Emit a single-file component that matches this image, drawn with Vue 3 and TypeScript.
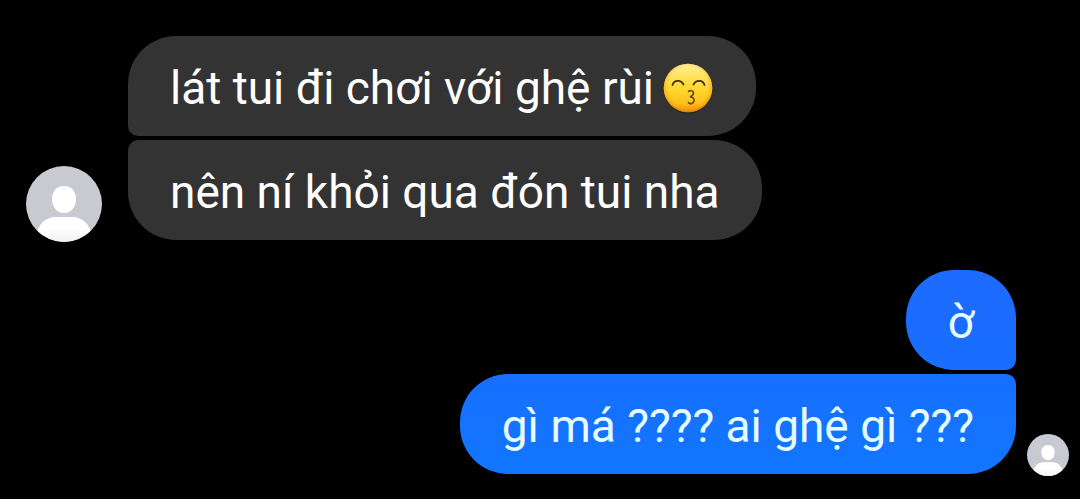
<script setup lang="ts">
interface Message {
  id: number
  text: string
  kiss?: boolean
}

interface Group {
  id: string
  side: 'received' | 'sent'
  messages: Message[]
}

const groups: Group[] = [
  {
    id: 'them',
    side: 'received',
    messages: [
      { id: 1, text: 'lát tui đi chơi với ghệ rùi', kiss: true },
      { id: 2, text: 'nên ní khỏi qua đón tui nha' },
    ],
  },
  {
    id: 'me',
    side: 'sent',
    messages: [
      { id: 3, text: 'ờ' },
      { id: 4, text: 'gì má ???? ai ghệ gì ???' },
    ],
  },
]
</script>

<template>
  <main class="chat">
    <section v-for="group in groups" :key="group.id" class="group" :class="group.side">
      <svg class="avatar" viewBox="0 0 76 76" aria-hidden="true">
        <defs>
          <clipPath :id="`disc-${group.id}`"><circle cx="38" cy="38" r="38" /></clipPath>
          <linearGradient :id="`body-${group.id}`" x1="0" y1="0" x2="0" y2="1">
            <stop offset="0.4" stop-color="#ffffff" />
            <stop offset="1" stop-color="#f2f2f4" />
          </linearGradient>
        </defs>
        <g :clip-path="`url(#disc-${group.id})`">
          <rect width="76" height="76" fill="#c9cad1" />
          <path
            d="M38 20C46 20 50 26 50 33.500C50 41 45 47 38 47C31 47 26 41 26 33.500C26 26 30 20 38 20Z"
            fill="#ffffff"
          />
          <path
            d="M10 76C10 60 18 51 30 51H46C58 51 66 60 66 76Z"
            :fill="`url(#body-${group.id})`"
          />
        </g>
      </svg>
      <div class="stack">
        <p v-for="message in group.messages" :key="message.id" class="bubble">
          {{ message.text }}
          <svg
            v-if="message.kiss"
            class="emoji"
            viewBox="0 0 52 52"
            role="img"
            aria-label="Kissing face with smiling eyes"
          >
            <defs>
              <linearGradient id="face" x1="0" y1="0" x2="0" y2="1">
                <stop offset="0" stop-color="#fff0a0" />
                <stop offset="0.28" stop-color="#ffe257" />
                <stop offset="0.55" stop-color="#ffd42c" />
                <stop offset="0.8" stop-color="#ffc41c" />
                <stop offset="1" stop-color="#ee9010" />
              </linearGradient>
              <radialGradient id="rim" cx="0.5" cy="0.46" r="0.54">
                <stop offset="0.75" stop-color="#f5a30c" stop-opacity="0" />
                <stop offset="0.92" stop-color="#f09a0c" stop-opacity="0.5" />
                <stop offset="1" stop-color="#c46a04" stop-opacity="0.8" />
              </radialGradient>
            </defs>
            <circle cx="26" cy="27" r="24.500" fill="#2a1c0c" opacity="0.8" />
            <circle cx="26" cy="26" r="24.300" fill="url(#face)" />
            <circle cx="26" cy="26" r="24.300" fill="url(#rim)" />
            <g fill="none" stroke="#43300c" stroke-width="1.800" stroke-linecap="round">
              <path d="M10.500 23C12 17.500 19 17.500 21.500 22.500" />
              <path d="M31.500 22.500C34 17.500 41 17.500 42.500 23" />
              <path
                stroke="#6b4708"
                stroke-width="1.700"
                d="M26.500 29.500C28 28 31.500 28.500 31.500 31C31.500 33.500 29 34.500 28 35C30 35 32.500 36 32 39C31.500 42 28 42.500 26.500 40.500"
              />
            </g>
          </svg>
        </p>
      </div>
    </section>
  </main>
</template>

<style scoped>
.chat {
  display: flex;
  flex-direction: column;
  gap: 28px;
  padding: 36px 11px 23px 26px;
  font-family: Roboto, "Noto Sans", sans-serif;
}

.group {
  display: flex;
  align-items: flex-end;
  gap: 26px;
}

.sent {
  flex-direction: row-reverse;
  gap: 11px;
}

.avatar {
  flex: none;
  width: 76px;
  height: 76px;
}

.sent .avatar {
  width: 42px;
  height: 42px;
}

.stack {
  display: flex;
  flex-direction: column;
  align-items: flex-start;
  gap: 4px;
  padding-bottom: 2px;
}

.sent .stack {
  align-items: flex-end;
}

.bubble {
  margin: 0;
  padding: 25px 42px 21px;
  border-radius: 10px 48px 48px 10px;
  background: #333333;
  color: #ffffff;
  font-size: 46px;
  line-height: 54px;
}

.bubble:first-child {
  border-top-left-radius: 48px;
}

.bubble:last-child {
  border-bottom-left-radius: 48px;
}

.sent .bubble {
  border-radius: 48px 10px 10px 48px;
  background: linear-gradient(#176fff, #1176ff);
  color: #e6fcff;
}

.sent .bubble:first-child {
  border-top-right-radius: 48px;
  background: linear-gradient(#1e6aff, #176fff);
}

.sent .bubble:last-child {
  border-bottom-right-radius: 48px;
}

.emoji {
  display: inline-block;
  width: 52px;
  height: 52px;
  margin: -4px 0 -4px -3px;
  vertical-align: -6px;
}
</style>

<style>
body {
  margin: 0;
  background: #000000;
}
</style>
